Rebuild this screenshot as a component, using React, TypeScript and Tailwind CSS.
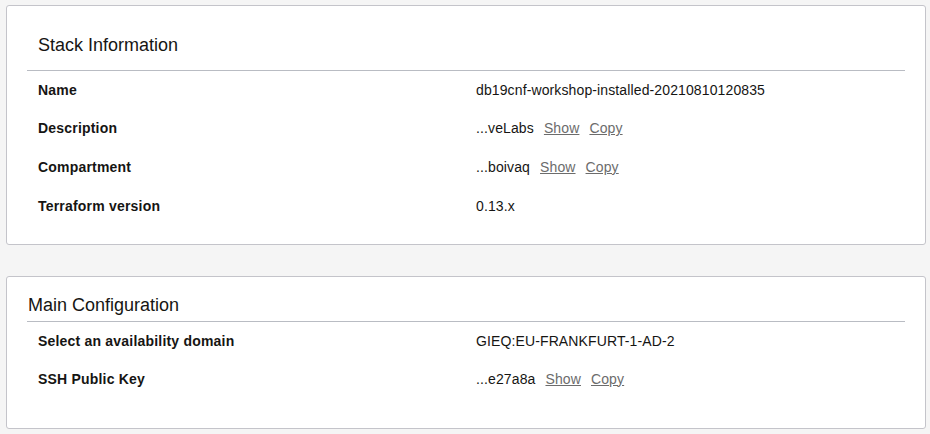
import React from 'react';

type Row = {
  label: string;
  value: string;
  links?: boolean;
};

const stackRows: Row[] = [
  { label: 'Name', value: 'db19cnf-workshop-installed-20210810120835' },
  { label: 'Description', value: '...veLabs', links: true },
  { label: 'Compartment', value: '...boivaq', links: true },
  { label: 'Terraform version', value: '0.13.x' },
];

const configRows: Row[] = [
  { label: 'Select an availability domain', value: 'GIEQ:EU-FRANKFURT-1-AD-2' },
  { label: 'SSH Public Key', value: '...e27a8a', links: true },
];

const InfoRow: React.FC<{ row: Row; height: string }> = ({ row, height }) => (
  <div className={`flex items-center pl-[11px] ${height}`}>
    <div className="w-[438px] shrink-0 text-[14px] font-bold tracking-[0.2px] text-[#161513]">
      {row.label}
    </div>
    <div className="flex items-center text-[14px] tracking-[0.12px] text-[#161513]">
      <span>{row.value}</span>
      {row.links && (
        <>
          <a href="#" className="ml-[10px] text-[#6c6c6c] underline">
            Show
          </a>
          <a href="#" className="ml-[10px] text-[#6c6c6c] underline">
            Copy
          </a>
        </>
      )}
    </div>
  </div>
);

const App: React.FC = () => {
  return (
    <div
      className="min-h-[434px] bg-[#f5f5f5] pl-[6px] pr-[4px] pt-[5px]"
      style={{ fontFamily: '"Liberation Sans", Arial, sans-serif' }}
    >
      <section className="h-[240px] rounded-[3px] border border-[#c4c4ca] bg-white px-[20px]">
        <h2 className="border-b border-[#b9bcc3] pb-[14px] pl-[11px] pt-[28px] text-[18px] leading-[22px] text-[#161513]">
          Stack Information
        </h2>
        {stackRows.map((row, i) => (
          <InfoRow key={row.label} row={row} height={i === 0 ? 'h-[38px]' : 'h-[39px]'} />
        ))}
      </section>

      <section className="mt-[31px] h-[153px] rounded-[3px] border border-[#c4c4ca] bg-white px-[20px]">
        <h2 className="border-b border-[#b9bcc3] pb-[5px] pl-px pt-[17px] text-[18px] leading-[22px] text-[#161513]">
          Main Configuration
        </h2>
        {configRows.map((row) => (
          <InfoRow key={row.label} row={row} height="h-[38px]" />
        ))}
      </section>
    </div>
  );
};

export default App;
